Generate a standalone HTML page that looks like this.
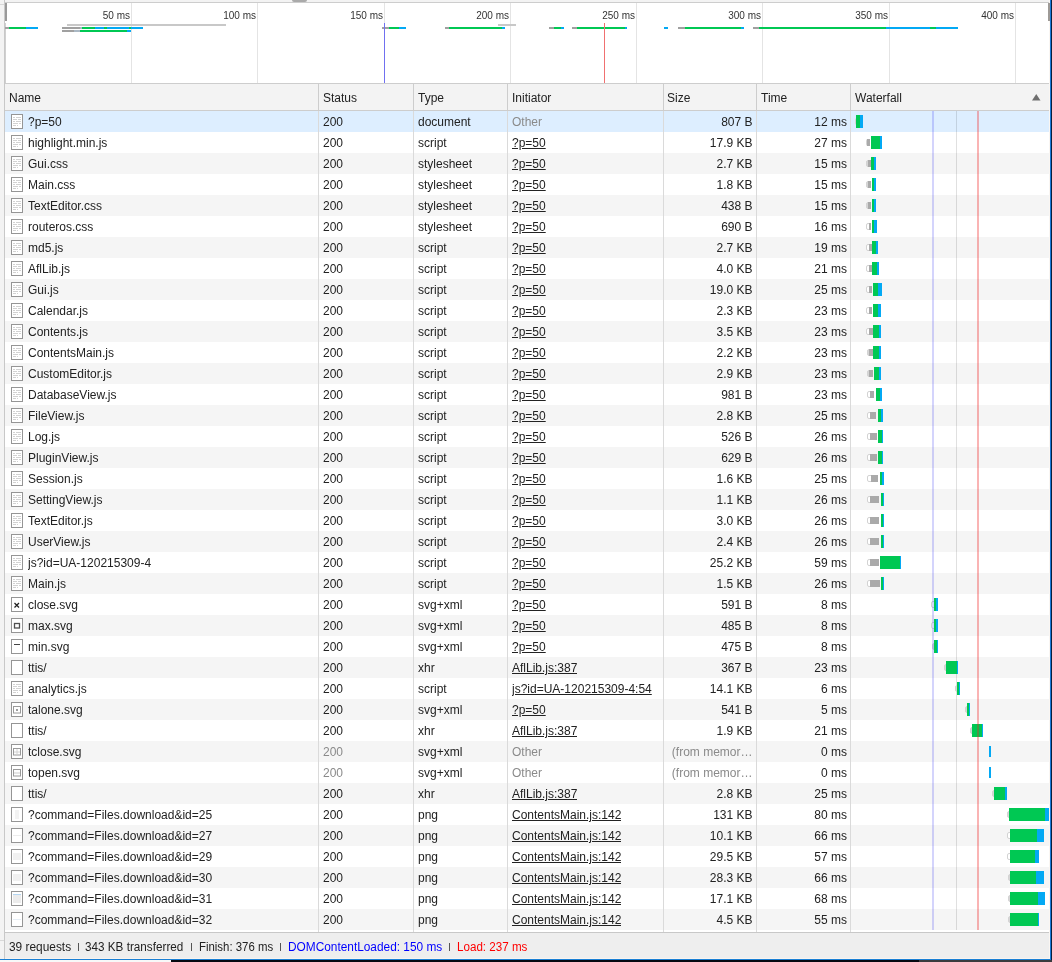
<!DOCTYPE html>
<html><head><meta charset="utf-8"><style>
*{box-sizing:border-box}
body{margin:0;will-change:transform;width:1052px;height:962px;overflow:hidden;background:#f3f3f3;position:relative;font-family:"Liberation Sans",sans-serif;font-size:12px;color:#222}
.a{position:absolute}
.ov{position:absolute;left:5px;top:3px;width:1044px;height:80px;background:#fff;overflow:hidden}
.gl{position:absolute;top:0;width:1px;height:80px;background:#e4e4e4}
.lbl{position:absolute;top:5px;font-size:10px;line-height:16px;color:#333;text-align:right;width:60px;white-space:nowrap}
.ob{position:absolute;height:2px}
.hdr{position:absolute;left:5px;top:84px;width:1044px;height:26px;background:#f3f3f3}
.th{position:absolute;top:1px;height:26px;line-height:26px;white-space:nowrap}
.row{position:absolute;left:5px;width:1044px;height:21px;background:#fff}
.row.g{background:#f5f5f5}
.row.nav{background:#ddeeff}
.c{position:absolute;top:1px;height:21px;line-height:21px;white-space:nowrap;overflow:hidden}
.r{text-align:right}
.u{text-decoration:underline}
.gr{color:#8a8a8a}
.ic{position:absolute;left:6px;top:3px;width:12px;height:15px;border:1px solid #959595;background:#fff}
.sv{position:absolute;left:0;top:0}
.pi{position:absolute}
.dl{position:absolute;height:1px;background:#d2d2d2}
.vd{position:absolute;width:1px;background:#cdcdcd;z-index:1}
.bar{position:absolute;height:13px;top:4px;z-index:2}
.q{position:absolute;z-index:2;height:7px;top:7px;border:1px solid #d3d3d3;background:#fff;border-radius:2px 0 0 2px}
.st{position:absolute;z-index:2;height:7px;top:7px;background:#aaa}
.ft{position:absolute;top:934px;height:26px;line-height:26px;white-space:nowrap}
.sp{position:absolute;top:943px;width:1px;height:8px;background:#555}
</style></head><body>

<div class="a" style="left:0;top:4px;width:4px;height:1px;background:#d8d8d8"></div>
<div class="a" style="left:0;top:940px;width:4px;height:1px;background:#d8d8d8"></div>
<div class="a" style="left:4px;top:0;width:1px;height:959px;background:#c8c8c8"></div>
<div class="a" style="left:5px;top:2px;width:1044px;height:1px;background:#cdcdcd"></div>
<div class="a" style="left:292px;top:0;width:15px;height:2px;background:#aaa;border-radius:0 0 4px 4px"></div>
<div class="ov">
<div class="gl" style="left:126px"></div>
<div class="lbl" style="left:65px">50 ms</div>
<div class="gl" style="left:252px"></div>
<div class="lbl" style="left:191px">100 ms</div>
<div class="gl" style="left:379px"></div>
<div class="lbl" style="left:318px">150 ms</div>
<div class="gl" style="left:505px"></div>
<div class="lbl" style="left:444px">200 ms</div>
<div class="gl" style="left:631px"></div>
<div class="lbl" style="left:570px">250 ms</div>
<div class="gl" style="left:757px"></div>
<div class="lbl" style="left:696px">300 ms</div>
<div class="gl" style="left:884px"></div>
<div class="lbl" style="left:823px">350 ms</div>
<div class="gl" style="left:1010px"></div>
<div class="lbl" style="left:949px">400 ms</div>
<div class="a" style="left:0;top:20px;width:1px;height:60px;background:#d0d0d0"></div>
<div class="a" style="left:0;top:0;width:2px;height:18px;background:#999"></div>
<div class="ob" style="left:62px;width:159px;top:21px;background:#c8c8c8"></div>
<div class="ob" style="left:493px;width:18px;top:21px;background:#c8c8c8"></div>
<div class="ob" style="left:0px;width:4px;top:24px;background:#a0a0a0"></div>
<div class="ob" style="left:4px;width:17px;top:24px;background:#00c853"></div>
<div class="ob" style="left:21px;width:12px;top:24px;background:#03a9f4"></div>
<div class="ob" style="left:57px;width:18px;top:24px;background:#a0a0a0"></div>
<div class="ob" style="left:75px;width:2px;top:24px;background:#aab8c4"></div>
<div class="ob" style="left:77px;width:13px;top:24px;background:#00c853"></div>
<div class="ob" style="left:90px;width:9px;top:24px;background:#03a9f4"></div>
<div class="ob" style="left:99px;width:3px;top:24px;background:#00c853"></div>
<div class="ob" style="left:102px;width:22px;top:24px;background:#03a9f4"></div>
<div class="ob" style="left:124px;width:2px;top:24px;background:#00c853"></div>
<div class="ob" style="left:126px;width:12px;top:24px;background:#03a9f4"></div>
<div class="ob" style="left:377px;width:7px;top:24px;background:#a0a0a0"></div>
<div class="ob" style="left:384px;width:10px;top:24px;background:#00c853"></div>
<div class="ob" style="left:394px;width:7px;top:24px;background:#03a9f4"></div>
<div class="ob" style="left:440px;width:4px;top:24px;background:#a0a0a0"></div>
<div class="ob" style="left:444px;width:53px;top:24px;background:#00c853"></div>
<div class="ob" style="left:497px;width:3px;top:24px;background:#03a9f4"></div>
<div class="ob" style="left:544px;width:5px;top:24px;background:#a0a0a0"></div>
<div class="ob" style="left:549px;width:7px;top:24px;background:#00c853"></div>
<div class="ob" style="left:556px;width:3px;top:24px;background:#03a9f4"></div>
<div class="ob" style="left:567px;width:5px;top:24px;background:#a0a0a0"></div>
<div class="ob" style="left:572px;width:48px;top:24px;background:#00c853"></div>
<div class="ob" style="left:620px;width:2px;top:24px;background:#03a9f4"></div>
<div class="ob" style="left:659px;width:2px;top:24px;background:#03a9f4"></div>
<div class="ob" style="left:661px;width:2px;top:24px;background:#03a9f4"></div>
<div class="ob" style="left:673px;width:7px;top:24px;background:#a0a0a0"></div>
<div class="ob" style="left:680px;width:56px;top:24px;background:#00c853"></div>
<div class="ob" style="left:736px;width:3px;top:24px;background:#03a9f4"></div>
<div class="ob" style="left:748px;width:6px;top:24px;background:#a0a0a0"></div>
<div class="ob" style="left:754px;width:127px;top:24px;background:#00c853"></div>
<div class="ob" style="left:881px;width:44px;top:24px;background:#03a9f4"></div>
<div class="ob" style="left:925px;width:6px;top:24px;background:#00c853"></div>
<div class="ob" style="left:931px;width:22px;top:24px;background:#03a9f4"></div>
<div class="ob" style="left:57px;width:12px;top:27px;background:#a0a0a0"></div>
<div class="ob" style="left:69px;width:6px;top:27px;background:#aab8c4"></div>
<div class="ob" style="left:75px;width:47px;top:27px;background:#00c853"></div>
<div class="ob" style="left:122px;width:4px;top:27px;background:#03a9f4"></div>
<div class="a" style="left:379px;top:20px;width:1px;height:60px;background:#7070f0"></div>
<div class="a" style="left:599px;top:20px;width:1px;height:60px;background:#f07070"></div>
</div>
<div class="hdr">
<div class="th" style="left:4px">Name</div>
<div class="th" style="left:318px">Status</div>
<div class="th" style="left:413px">Type</div>
<div class="th" style="left:507px">Initiator</div>
<div class="th" style="left:662px">Size</div>
<div class="th" style="left:756px">Time</div>
<div class="th" style="left:850px">Waterfall</div>
<svg class="a" style="left:1027px;top:10px" width="9" height="7"><path d="M0 6.5L4.25 0L8.5 6.5Z" fill="#6e6e6e"/></svg>
</div>
<div class="a" style="left:5px;top:83px;width:1044px;height:1px;background:#cdcdcd"></div>
<div class="a" style="left:5px;top:110px;width:1044px;height:1px;background:#cdcdcd"></div>
<div class="row nav" style="top:111px"><span class="ic"><i class="dl" style="top:2px;left:1px;width:2px"></i><i class="dl" style="top:2px;left:4px;width:5px"></i><i class="dl" style="top:4px;left:1px;width:4px"></i><i class="dl" style="top:4px;left:6px;width:3px"></i><i class="dl" style="top:6px;left:1px;width:2px"></i><i class="dl" style="top:6px;left:4px;width:5px"></i><i class="dl" style="top:8px;left:1px;width:5px"></i><i class="dl" style="top:8px;left:7px;width:2px"></i><i class="dl" style="top:10px;left:1px;width:3px"></i><i class="dl" style="top:10px;left:5px;width:1px"></i></span><div class="c" style="left:23px;width:290px">?p=50</div><div class="c " style="left:318px">200</div><div class="c" style="left:413px">document</div><div class="c gr" style="left:507px">Other</div><div class="c r " style="left:659.5px;width:88px">807 B</div><div class="c r" style="left:752px;width:90px">12 ms</div><div class="q" style="left:850px;width:2px;background:#d6d6d6"></div><div class="bar" style="left:851px;width:4px;background:#00c853"></div><div class="bar" style="left:855px;width:3px;background:#03a9f4"></div></div>
<div class="row" style="top:132px"><span class="ic"><i class="dl" style="top:2px;left:1px;width:2px"></i><i class="dl" style="top:2px;left:4px;width:5px"></i><i class="dl" style="top:4px;left:1px;width:4px"></i><i class="dl" style="top:4px;left:6px;width:3px"></i><i class="dl" style="top:6px;left:1px;width:2px"></i><i class="dl" style="top:6px;left:4px;width:5px"></i><i class="dl" style="top:8px;left:1px;width:5px"></i><i class="dl" style="top:8px;left:7px;width:2px"></i><i class="dl" style="top:10px;left:1px;width:3px"></i><i class="dl" style="top:10px;left:5px;width:1px"></i></span><div class="c" style="left:23px;width:290px">highlight.min.js</div><div class="c " style="left:318px">200</div><div class="c" style="left:413px">script</div><div class="c u" style="left:507px">?p=50</div><div class="c r " style="left:659.5px;width:88px">17.9 KB</div><div class="c r" style="left:752px;width:90px">27 ms</div><div class="q" style="left:861px;width:2px;background:#d6d6d6"></div><div class="st" style="left:862px;width:3px"></div><div class="bar" style="left:866px;width:9px;background:#00c853"></div><div class="bar" style="left:875px;width:2px;background:#03a9f4"></div></div>
<div class="row g" style="top:153px"><span class="ic"><i class="dl" style="top:2px;left:1px;width:2px"></i><i class="dl" style="top:2px;left:4px;width:5px"></i><i class="dl" style="top:4px;left:1px;width:4px"></i><i class="dl" style="top:4px;left:6px;width:3px"></i><i class="dl" style="top:6px;left:1px;width:2px"></i><i class="dl" style="top:6px;left:4px;width:5px"></i><i class="dl" style="top:8px;left:1px;width:5px"></i><i class="dl" style="top:8px;left:7px;width:2px"></i><i class="dl" style="top:10px;left:1px;width:3px"></i><i class="dl" style="top:10px;left:5px;width:1px"></i></span><div class="c" style="left:23px;width:290px">Gui.css</div><div class="c " style="left:318px">200</div><div class="c" style="left:413px">stylesheet</div><div class="c u" style="left:507px">?p=50</div><div class="c r " style="left:659.5px;width:88px">2.7 KB</div><div class="c r" style="left:752px;width:90px">15 ms</div><div class="q" style="left:861px;width:3px;background:#d6d6d6"></div><div class="st" style="left:863px;width:3px"></div><div class="bar" style="left:866px;width:3px;background:#00c853"></div><div class="bar" style="left:869px;width:2px;background:#03a9f4"></div></div>
<div class="row" style="top:174px"><span class="ic"><i class="dl" style="top:2px;left:1px;width:2px"></i><i class="dl" style="top:2px;left:4px;width:5px"></i><i class="dl" style="top:4px;left:1px;width:4px"></i><i class="dl" style="top:4px;left:6px;width:3px"></i><i class="dl" style="top:6px;left:1px;width:2px"></i><i class="dl" style="top:6px;left:4px;width:5px"></i><i class="dl" style="top:8px;left:1px;width:5px"></i><i class="dl" style="top:8px;left:7px;width:2px"></i><i class="dl" style="top:10px;left:1px;width:3px"></i><i class="dl" style="top:10px;left:5px;width:1px"></i></span><div class="c" style="left:23px;width:290px">Main.css</div><div class="c " style="left:318px">200</div><div class="c" style="left:413px">stylesheet</div><div class="c u" style="left:507px">?p=50</div><div class="c r " style="left:659.5px;width:88px">1.8 KB</div><div class="c r" style="left:752px;width:90px">15 ms</div><div class="q" style="left:861px;width:3px;background:#d6d6d6"></div><div class="st" style="left:863px;width:3px"></div><div class="bar" style="left:867px;width:2px;background:#00c853"></div><div class="bar" style="left:869px;width:2px;background:#03a9f4"></div></div>
<div class="row g" style="top:195px"><span class="ic"><i class="dl" style="top:2px;left:1px;width:2px"></i><i class="dl" style="top:2px;left:4px;width:5px"></i><i class="dl" style="top:4px;left:1px;width:4px"></i><i class="dl" style="top:4px;left:6px;width:3px"></i><i class="dl" style="top:6px;left:1px;width:2px"></i><i class="dl" style="top:6px;left:4px;width:5px"></i><i class="dl" style="top:8px;left:1px;width:5px"></i><i class="dl" style="top:8px;left:7px;width:2px"></i><i class="dl" style="top:10px;left:1px;width:3px"></i><i class="dl" style="top:10px;left:5px;width:1px"></i></span><div class="c" style="left:23px;width:290px">TextEditor.css</div><div class="c " style="left:318px">200</div><div class="c" style="left:413px">stylesheet</div><div class="c u" style="left:507px">?p=50</div><div class="c r " style="left:659.5px;width:88px">438 B</div><div class="c r" style="left:752px;width:90px">15 ms</div><div class="q" style="left:861px;width:3px;background:#d6d6d6"></div><div class="st" style="left:863px;width:3px"></div><div class="bar" style="left:867px;width:2px;background:#00c853"></div><div class="bar" style="left:869px;width:2px;background:#03a9f4"></div></div>
<div class="row" style="top:216px"><span class="ic"><i class="dl" style="top:2px;left:1px;width:2px"></i><i class="dl" style="top:2px;left:4px;width:5px"></i><i class="dl" style="top:4px;left:1px;width:4px"></i><i class="dl" style="top:4px;left:6px;width:3px"></i><i class="dl" style="top:6px;left:1px;width:2px"></i><i class="dl" style="top:6px;left:4px;width:5px"></i><i class="dl" style="top:8px;left:1px;width:5px"></i><i class="dl" style="top:8px;left:7px;width:2px"></i><i class="dl" style="top:10px;left:1px;width:3px"></i><i class="dl" style="top:10px;left:5px;width:1px"></i></span><div class="c" style="left:23px;width:290px">routeros.css</div><div class="c " style="left:318px">200</div><div class="c" style="left:413px">stylesheet</div><div class="c u" style="left:507px">?p=50</div><div class="c r " style="left:659.5px;width:88px">690 B</div><div class="c r" style="left:752px;width:90px">16 ms</div><div class="q" style="left:861px;width:4px"></div><div class="st" style="left:864px;width:2px"></div><div class="bar" style="left:867px;width:2px;background:#00c853"></div><div class="bar" style="left:869px;width:3px;background:#03a9f4"></div></div>
<div class="row g" style="top:237px"><span class="ic"><i class="dl" style="top:2px;left:1px;width:2px"></i><i class="dl" style="top:2px;left:4px;width:5px"></i><i class="dl" style="top:4px;left:1px;width:4px"></i><i class="dl" style="top:4px;left:6px;width:3px"></i><i class="dl" style="top:6px;left:1px;width:2px"></i><i class="dl" style="top:6px;left:4px;width:5px"></i><i class="dl" style="top:8px;left:1px;width:5px"></i><i class="dl" style="top:8px;left:7px;width:2px"></i><i class="dl" style="top:10px;left:1px;width:3px"></i><i class="dl" style="top:10px;left:5px;width:1px"></i></span><div class="c" style="left:23px;width:290px">md5.js</div><div class="c " style="left:318px">200</div><div class="c" style="left:413px">script</div><div class="c u" style="left:507px">?p=50</div><div class="c r " style="left:659.5px;width:88px">2.7 KB</div><div class="c r" style="left:752px;width:90px">19 ms</div><div class="q" style="left:861px;width:4px"></div><div class="st" style="left:864px;width:3px"></div><div class="bar" style="left:867px;width:4px;background:#00c853"></div><div class="bar" style="left:871px;width:2px;background:#03a9f4"></div></div>
<div class="row" style="top:258px"><span class="ic"><i class="dl" style="top:2px;left:1px;width:2px"></i><i class="dl" style="top:2px;left:4px;width:5px"></i><i class="dl" style="top:4px;left:1px;width:4px"></i><i class="dl" style="top:4px;left:6px;width:3px"></i><i class="dl" style="top:6px;left:1px;width:2px"></i><i class="dl" style="top:6px;left:4px;width:5px"></i><i class="dl" style="top:8px;left:1px;width:5px"></i><i class="dl" style="top:8px;left:7px;width:2px"></i><i class="dl" style="top:10px;left:1px;width:3px"></i><i class="dl" style="top:10px;left:5px;width:1px"></i></span><div class="c" style="left:23px;width:290px">AflLib.js</div><div class="c " style="left:318px">200</div><div class="c" style="left:413px">script</div><div class="c u" style="left:507px">?p=50</div><div class="c r " style="left:659.5px;width:88px">4.0 KB</div><div class="c r" style="left:752px;width:90px">21 ms</div><div class="q" style="left:861px;width:4px"></div><div class="st" style="left:864px;width:3px"></div><div class="bar" style="left:867px;width:5px;background:#00c853"></div><div class="bar" style="left:872px;width:2px;background:#03a9f4"></div></div>
<div class="row g" style="top:279px"><span class="ic"><i class="dl" style="top:2px;left:1px;width:2px"></i><i class="dl" style="top:2px;left:4px;width:5px"></i><i class="dl" style="top:4px;left:1px;width:4px"></i><i class="dl" style="top:4px;left:6px;width:3px"></i><i class="dl" style="top:6px;left:1px;width:2px"></i><i class="dl" style="top:6px;left:4px;width:5px"></i><i class="dl" style="top:8px;left:1px;width:5px"></i><i class="dl" style="top:8px;left:7px;width:2px"></i><i class="dl" style="top:10px;left:1px;width:3px"></i><i class="dl" style="top:10px;left:5px;width:1px"></i></span><div class="c" style="left:23px;width:290px">Gui.js</div><div class="c " style="left:318px">200</div><div class="c" style="left:413px">script</div><div class="c u" style="left:507px">?p=50</div><div class="c r " style="left:659.5px;width:88px">19.0 KB</div><div class="c r" style="left:752px;width:90px">25 ms</div><div class="q" style="left:861px;width:4px"></div><div class="st" style="left:864px;width:3px"></div><div class="bar" style="left:868px;width:5px;background:#00c853"></div><div class="bar" style="left:873px;width:4px;background:#03a9f4"></div></div>
<div class="row" style="top:300px"><span class="ic"><i class="dl" style="top:2px;left:1px;width:2px"></i><i class="dl" style="top:2px;left:4px;width:5px"></i><i class="dl" style="top:4px;left:1px;width:4px"></i><i class="dl" style="top:4px;left:6px;width:3px"></i><i class="dl" style="top:6px;left:1px;width:2px"></i><i class="dl" style="top:6px;left:4px;width:5px"></i><i class="dl" style="top:8px;left:1px;width:5px"></i><i class="dl" style="top:8px;left:7px;width:2px"></i><i class="dl" style="top:10px;left:1px;width:3px"></i><i class="dl" style="top:10px;left:5px;width:1px"></i></span><div class="c" style="left:23px;width:290px">Calendar.js</div><div class="c " style="left:318px">200</div><div class="c" style="left:413px">script</div><div class="c u" style="left:507px">?p=50</div><div class="c r " style="left:659.5px;width:88px">2.3 KB</div><div class="c r" style="left:752px;width:90px">23 ms</div><div class="q" style="left:861px;width:4px"></div><div class="st" style="left:864px;width:3px"></div><div class="bar" style="left:868px;width:5px;background:#00c853"></div><div class="bar" style="left:873px;width:3px;background:#03a9f4"></div></div>
<div class="row g" style="top:321px"><span class="ic"><i class="dl" style="top:2px;left:1px;width:2px"></i><i class="dl" style="top:2px;left:4px;width:5px"></i><i class="dl" style="top:4px;left:1px;width:4px"></i><i class="dl" style="top:4px;left:6px;width:3px"></i><i class="dl" style="top:6px;left:1px;width:2px"></i><i class="dl" style="top:6px;left:4px;width:5px"></i><i class="dl" style="top:8px;left:1px;width:5px"></i><i class="dl" style="top:8px;left:7px;width:2px"></i><i class="dl" style="top:10px;left:1px;width:3px"></i><i class="dl" style="top:10px;left:5px;width:1px"></i></span><div class="c" style="left:23px;width:290px">Contents.js</div><div class="c " style="left:318px">200</div><div class="c" style="left:413px">script</div><div class="c u" style="left:507px">?p=50</div><div class="c r " style="left:659.5px;width:88px">3.5 KB</div><div class="c r" style="left:752px;width:90px">23 ms</div><div class="q" style="left:861px;width:4px"></div><div class="st" style="left:864px;width:4px"></div><div class="bar" style="left:868px;width:6px;background:#00c853"></div><div class="bar" style="left:874px;width:2px;background:#03a9f4"></div></div>
<div class="row" style="top:342px"><span class="ic"><i class="dl" style="top:2px;left:1px;width:2px"></i><i class="dl" style="top:2px;left:4px;width:5px"></i><i class="dl" style="top:4px;left:1px;width:4px"></i><i class="dl" style="top:4px;left:6px;width:3px"></i><i class="dl" style="top:6px;left:1px;width:2px"></i><i class="dl" style="top:6px;left:4px;width:5px"></i><i class="dl" style="top:8px;left:1px;width:5px"></i><i class="dl" style="top:8px;left:7px;width:2px"></i><i class="dl" style="top:10px;left:1px;width:3px"></i><i class="dl" style="top:10px;left:5px;width:1px"></i></span><div class="c" style="left:23px;width:290px">ContentsMain.js</div><div class="c " style="left:318px">200</div><div class="c" style="left:413px">script</div><div class="c u" style="left:507px">?p=50</div><div class="c r " style="left:659.5px;width:88px">2.2 KB</div><div class="c r" style="left:752px;width:90px">23 ms</div><div class="q" style="left:862px;width:3px;background:#d6d6d6"></div><div class="st" style="left:864px;width:4px"></div><div class="bar" style="left:868px;width:6px;background:#00c853"></div><div class="bar" style="left:874px;width:2px;background:#03a9f4"></div></div>
<div class="row g" style="top:363px"><span class="ic"><i class="dl" style="top:2px;left:1px;width:2px"></i><i class="dl" style="top:2px;left:4px;width:5px"></i><i class="dl" style="top:4px;left:1px;width:4px"></i><i class="dl" style="top:4px;left:6px;width:3px"></i><i class="dl" style="top:6px;left:1px;width:2px"></i><i class="dl" style="top:6px;left:4px;width:5px"></i><i class="dl" style="top:8px;left:1px;width:5px"></i><i class="dl" style="top:8px;left:7px;width:2px"></i><i class="dl" style="top:10px;left:1px;width:3px"></i><i class="dl" style="top:10px;left:5px;width:1px"></i></span><div class="c" style="left:23px;width:290px">CustomEditor.js</div><div class="c " style="left:318px">200</div><div class="c" style="left:413px">script</div><div class="c u" style="left:507px">?p=50</div><div class="c r " style="left:659.5px;width:88px">2.9 KB</div><div class="c r" style="left:752px;width:90px">23 ms</div><div class="q" style="left:862px;width:3px;background:#d6d6d6"></div><div class="st" style="left:864px;width:4px"></div><div class="bar" style="left:869px;width:5px;background:#00c853"></div><div class="bar" style="left:874px;width:2px;background:#03a9f4"></div></div>
<div class="row" style="top:384px"><span class="ic"><i class="dl" style="top:2px;left:1px;width:2px"></i><i class="dl" style="top:2px;left:4px;width:5px"></i><i class="dl" style="top:4px;left:1px;width:4px"></i><i class="dl" style="top:4px;left:6px;width:3px"></i><i class="dl" style="top:6px;left:1px;width:2px"></i><i class="dl" style="top:6px;left:4px;width:5px"></i><i class="dl" style="top:8px;left:1px;width:5px"></i><i class="dl" style="top:8px;left:7px;width:2px"></i><i class="dl" style="top:10px;left:1px;width:3px"></i><i class="dl" style="top:10px;left:5px;width:1px"></i></span><div class="c" style="left:23px;width:290px">DatabaseView.js</div><div class="c " style="left:318px">200</div><div class="c" style="left:413px">script</div><div class="c u" style="left:507px">?p=50</div><div class="c r " style="left:659.5px;width:88px">981 B</div><div class="c r" style="left:752px;width:90px">23 ms</div><div class="q" style="left:862px;width:4px"></div><div class="st" style="left:865px;width:4px"></div><div class="bar" style="left:871px;width:4px;background:#00c853"></div><div class="bar" style="left:875px;width:2px;background:#03a9f4"></div></div>
<div class="row g" style="top:405px"><span class="ic"><i class="dl" style="top:2px;left:1px;width:2px"></i><i class="dl" style="top:2px;left:4px;width:5px"></i><i class="dl" style="top:4px;left:1px;width:4px"></i><i class="dl" style="top:4px;left:6px;width:3px"></i><i class="dl" style="top:6px;left:1px;width:2px"></i><i class="dl" style="top:6px;left:4px;width:5px"></i><i class="dl" style="top:8px;left:1px;width:5px"></i><i class="dl" style="top:8px;left:7px;width:2px"></i><i class="dl" style="top:10px;left:1px;width:3px"></i><i class="dl" style="top:10px;left:5px;width:1px"></i></span><div class="c" style="left:23px;width:290px">FileView.js</div><div class="c " style="left:318px">200</div><div class="c" style="left:413px">script</div><div class="c u" style="left:507px">?p=50</div><div class="c r " style="left:659.5px;width:88px">2.8 KB</div><div class="c r" style="left:752px;width:90px">25 ms</div><div class="q" style="left:862px;width:4px"></div><div class="st" style="left:865px;width:6px"></div><div class="bar" style="left:873px;width:3px;background:#00c853"></div><div class="bar" style="left:876px;width:2px;background:#03a9f4"></div></div>
<div class="row" style="top:426px"><span class="ic"><i class="dl" style="top:2px;left:1px;width:2px"></i><i class="dl" style="top:2px;left:4px;width:5px"></i><i class="dl" style="top:4px;left:1px;width:4px"></i><i class="dl" style="top:4px;left:6px;width:3px"></i><i class="dl" style="top:6px;left:1px;width:2px"></i><i class="dl" style="top:6px;left:4px;width:5px"></i><i class="dl" style="top:8px;left:1px;width:5px"></i><i class="dl" style="top:8px;left:7px;width:2px"></i><i class="dl" style="top:10px;left:1px;width:3px"></i><i class="dl" style="top:10px;left:5px;width:1px"></i></span><div class="c" style="left:23px;width:290px">Log.js</div><div class="c " style="left:318px">200</div><div class="c" style="left:413px">script</div><div class="c u" style="left:507px">?p=50</div><div class="c r " style="left:659.5px;width:88px">526 B</div><div class="c r" style="left:752px;width:90px">26 ms</div><div class="q" style="left:862px;width:4px"></div><div class="st" style="left:865px;width:7px"></div><div class="bar" style="left:873px;width:4px;background:#00c853"></div><div class="bar" style="left:877px;width:1px;background:#03a9f4"></div></div>
<div class="row g" style="top:447px"><span class="ic"><i class="dl" style="top:2px;left:1px;width:2px"></i><i class="dl" style="top:2px;left:4px;width:5px"></i><i class="dl" style="top:4px;left:1px;width:4px"></i><i class="dl" style="top:4px;left:6px;width:3px"></i><i class="dl" style="top:6px;left:1px;width:2px"></i><i class="dl" style="top:6px;left:4px;width:5px"></i><i class="dl" style="top:8px;left:1px;width:5px"></i><i class="dl" style="top:8px;left:7px;width:2px"></i><i class="dl" style="top:10px;left:1px;width:3px"></i><i class="dl" style="top:10px;left:5px;width:1px"></i></span><div class="c" style="left:23px;width:290px">PluginView.js</div><div class="c " style="left:318px">200</div><div class="c" style="left:413px">script</div><div class="c u" style="left:507px">?p=50</div><div class="c r " style="left:659.5px;width:88px">629 B</div><div class="c r" style="left:752px;width:90px">26 ms</div><div class="q" style="left:862px;width:4px"></div><div class="st" style="left:865px;width:7px"></div><div class="bar" style="left:873px;width:4px;background:#00c853"></div><div class="bar" style="left:877px;width:1px;background:#03a9f4"></div></div>
<div class="row" style="top:468px"><span class="ic"><i class="dl" style="top:2px;left:1px;width:2px"></i><i class="dl" style="top:2px;left:4px;width:5px"></i><i class="dl" style="top:4px;left:1px;width:4px"></i><i class="dl" style="top:4px;left:6px;width:3px"></i><i class="dl" style="top:6px;left:1px;width:2px"></i><i class="dl" style="top:6px;left:4px;width:5px"></i><i class="dl" style="top:8px;left:1px;width:5px"></i><i class="dl" style="top:8px;left:7px;width:2px"></i><i class="dl" style="top:10px;left:1px;width:3px"></i><i class="dl" style="top:10px;left:5px;width:1px"></i></span><div class="c" style="left:23px;width:290px">Session.js</div><div class="c " style="left:318px">200</div><div class="c" style="left:413px">script</div><div class="c u" style="left:507px">?p=50</div><div class="c r " style="left:659.5px;width:88px">1.6 KB</div><div class="c r" style="left:752px;width:90px">25 ms</div><div class="q" style="left:862px;width:5px"></div><div class="st" style="left:866px;width:7px"></div><div class="bar" style="left:875px;width:2px;background:#00c853"></div><div class="bar" style="left:877px;width:2px;background:#03a9f4"></div></div>
<div class="row g" style="top:489px"><span class="ic"><i class="dl" style="top:2px;left:1px;width:2px"></i><i class="dl" style="top:2px;left:4px;width:5px"></i><i class="dl" style="top:4px;left:1px;width:4px"></i><i class="dl" style="top:4px;left:6px;width:3px"></i><i class="dl" style="top:6px;left:1px;width:2px"></i><i class="dl" style="top:6px;left:4px;width:5px"></i><i class="dl" style="top:8px;left:1px;width:5px"></i><i class="dl" style="top:8px;left:7px;width:2px"></i><i class="dl" style="top:10px;left:1px;width:3px"></i><i class="dl" style="top:10px;left:5px;width:1px"></i></span><div class="c" style="left:23px;width:290px">SettingView.js</div><div class="c " style="left:318px">200</div><div class="c" style="left:413px">script</div><div class="c u" style="left:507px">?p=50</div><div class="c r " style="left:659.5px;width:88px">1.1 KB</div><div class="c r" style="left:752px;width:90px">26 ms</div><div class="q" style="left:862px;width:4px"></div><div class="st" style="left:865px;width:9px"></div><div class="bar" style="left:876px;width:2px;background:#00c853"></div><div class="bar" style="left:878px;width:1px;background:#03a9f4"></div></div>
<div class="row" style="top:510px"><span class="ic"><i class="dl" style="top:2px;left:1px;width:2px"></i><i class="dl" style="top:2px;left:4px;width:5px"></i><i class="dl" style="top:4px;left:1px;width:4px"></i><i class="dl" style="top:4px;left:6px;width:3px"></i><i class="dl" style="top:6px;left:1px;width:2px"></i><i class="dl" style="top:6px;left:4px;width:5px"></i><i class="dl" style="top:8px;left:1px;width:5px"></i><i class="dl" style="top:8px;left:7px;width:2px"></i><i class="dl" style="top:10px;left:1px;width:3px"></i><i class="dl" style="top:10px;left:5px;width:1px"></i></span><div class="c" style="left:23px;width:290px">TextEditor.js</div><div class="c " style="left:318px">200</div><div class="c" style="left:413px">script</div><div class="c u" style="left:507px">?p=50</div><div class="c r " style="left:659.5px;width:88px">3.0 KB</div><div class="c r" style="left:752px;width:90px">26 ms</div><div class="q" style="left:862px;width:4px"></div><div class="st" style="left:865px;width:9px"></div><div class="bar" style="left:876px;width:2px;background:#00c853"></div><div class="bar" style="left:878px;width:1px;background:#03a9f4"></div></div>
<div class="row g" style="top:531px"><span class="ic"><i class="dl" style="top:2px;left:1px;width:2px"></i><i class="dl" style="top:2px;left:4px;width:5px"></i><i class="dl" style="top:4px;left:1px;width:4px"></i><i class="dl" style="top:4px;left:6px;width:3px"></i><i class="dl" style="top:6px;left:1px;width:2px"></i><i class="dl" style="top:6px;left:4px;width:5px"></i><i class="dl" style="top:8px;left:1px;width:5px"></i><i class="dl" style="top:8px;left:7px;width:2px"></i><i class="dl" style="top:10px;left:1px;width:3px"></i><i class="dl" style="top:10px;left:5px;width:1px"></i></span><div class="c" style="left:23px;width:290px">UserView.js</div><div class="c " style="left:318px">200</div><div class="c" style="left:413px">script</div><div class="c u" style="left:507px">?p=50</div><div class="c r " style="left:659.5px;width:88px">2.4 KB</div><div class="c r" style="left:752px;width:90px">26 ms</div><div class="q" style="left:862px;width:4px"></div><div class="st" style="left:865px;width:9px"></div><div class="bar" style="left:876px;width:2px;background:#00c853"></div><div class="bar" style="left:878px;width:1px;background:#03a9f4"></div></div>
<div class="row" style="top:552px"><span class="ic"><i class="dl" style="top:2px;left:1px;width:2px"></i><i class="dl" style="top:2px;left:4px;width:5px"></i><i class="dl" style="top:4px;left:1px;width:4px"></i><i class="dl" style="top:4px;left:6px;width:3px"></i><i class="dl" style="top:6px;left:1px;width:2px"></i><i class="dl" style="top:6px;left:4px;width:5px"></i><i class="dl" style="top:8px;left:1px;width:5px"></i><i class="dl" style="top:8px;left:7px;width:2px"></i><i class="dl" style="top:10px;left:1px;width:3px"></i><i class="dl" style="top:10px;left:5px;width:1px"></i></span><div class="c" style="left:23px;width:290px">js?id=UA-120215309-4</div><div class="c " style="left:318px">200</div><div class="c" style="left:413px">script</div><div class="c u" style="left:507px">?p=50</div><div class="c r " style="left:659.5px;width:88px">25.2 KB</div><div class="c r" style="left:752px;width:90px">59 ms</div><div class="q" style="left:862px;width:4px"></div><div class="st" style="left:865px;width:9px"></div><div class="bar" style="left:875px;width:20px;background:#00c853"></div><div class="bar" style="left:895px;width:1px;background:#03a9f4"></div></div>
<div class="row g" style="top:573px"><span class="ic"><i class="dl" style="top:2px;left:1px;width:2px"></i><i class="dl" style="top:2px;left:4px;width:5px"></i><i class="dl" style="top:4px;left:1px;width:4px"></i><i class="dl" style="top:4px;left:6px;width:3px"></i><i class="dl" style="top:6px;left:1px;width:2px"></i><i class="dl" style="top:6px;left:4px;width:5px"></i><i class="dl" style="top:8px;left:1px;width:5px"></i><i class="dl" style="top:8px;left:7px;width:2px"></i><i class="dl" style="top:10px;left:1px;width:3px"></i><i class="dl" style="top:10px;left:5px;width:1px"></i></span><div class="c" style="left:23px;width:290px">Main.js</div><div class="c " style="left:318px">200</div><div class="c" style="left:413px">script</div><div class="c u" style="left:507px">?p=50</div><div class="c r " style="left:659.5px;width:88px">1.5 KB</div><div class="c r" style="left:752px;width:90px">26 ms</div><div class="q" style="left:862px;width:4px"></div><div class="st" style="left:865px;width:10px"></div><div class="bar" style="left:876px;width:2px;background:#00c853"></div><div class="bar" style="left:878px;width:1px;background:#03a9f4"></div></div>
<div class="row" style="top:594px"><span class="ic"><svg width="10" height="13" class="sv"><path d="M2.5 5L7 9.5M7 5L2.5 9.5" stroke="#222" stroke-width="1.25"/></svg></span><div class="c" style="left:23px;width:290px">close.svg</div><div class="c " style="left:318px">200</div><div class="c" style="left:413px">svg+xml</div><div class="c u" style="left:507px">?p=50</div><div class="c r " style="left:659.5px;width:88px">591 B</div><div class="c r" style="left:752px;width:90px">8 ms</div><div class="q" style="left:926px;width:4px"></div><div class="bar" style="left:929px;width:2px;background:#00c853"></div><div class="bar" style="left:931px;width:2px;background:#03a9f4"></div></div>
<div class="row g" style="top:615px"><span class="ic"><svg width="10" height="13" class="sv"><rect x="2.5" y="4.5" width="5" height="4.5" fill="none" stroke="#505050" stroke-width="1.3"/></svg></span><div class="c" style="left:23px;width:290px">max.svg</div><div class="c " style="left:318px">200</div><div class="c" style="left:413px">svg+xml</div><div class="c u" style="left:507px">?p=50</div><div class="c r " style="left:659.5px;width:88px">485 B</div><div class="c r" style="left:752px;width:90px">8 ms</div><div class="q" style="left:926px;width:4px"></div><div class="bar" style="left:929px;width:2px;background:#00c853"></div><div class="bar" style="left:931px;width:2px;background:#03a9f4"></div></div>
<div class="row" style="top:636px"><span class="ic"><svg width="10" height="13" class="sv"><path d="M2 4.5H8" stroke="#444" stroke-width="1"/></svg></span><div class="c" style="left:23px;width:290px">min.svg</div><div class="c " style="left:318px">200</div><div class="c" style="left:413px">svg+xml</div><div class="c u" style="left:507px">?p=50</div><div class="c r " style="left:659.5px;width:88px">475 B</div><div class="c r" style="left:752px;width:90px">8 ms</div><div class="q" style="left:927px;width:3px;background:#d6d6d6"></div><div class="bar" style="left:929px;width:3px;background:#00c853"></div><div class="bar" style="left:932px;width:1px;background:#03a9f4"></div></div>
<div class="row g" style="top:657px"><span class="ic"></span><div class="c" style="left:23px;width:290px">ttis/</div><div class="c " style="left:318px">200</div><div class="c" style="left:413px">xhr</div><div class="c u" style="left:507px">AflLib.js:387</div><div class="c r " style="left:659.5px;width:88px">367 B</div><div class="c r" style="left:752px;width:90px">23 ms</div><div class="q" style="left:939px;width:3px;background:#d6d6d6"></div><div class="bar" style="left:941px;width:11px;background:#00c853"></div><div class="bar" style="left:952px;width:1px;background:#03a9f4"></div></div>
<div class="row" style="top:678px"><span class="ic"><i class="dl" style="top:2px;left:1px;width:2px"></i><i class="dl" style="top:2px;left:4px;width:5px"></i><i class="dl" style="top:4px;left:1px;width:4px"></i><i class="dl" style="top:4px;left:6px;width:3px"></i><i class="dl" style="top:6px;left:1px;width:2px"></i><i class="dl" style="top:6px;left:4px;width:5px"></i><i class="dl" style="top:8px;left:1px;width:5px"></i><i class="dl" style="top:8px;left:7px;width:2px"></i><i class="dl" style="top:10px;left:1px;width:3px"></i><i class="dl" style="top:10px;left:5px;width:1px"></i></span><div class="c" style="left:23px;width:290px">analytics.js</div><div class="c " style="left:318px">200</div><div class="c" style="left:413px">script</div><div class="c u" style="left:507px">js?id=UA-120215309-4:54</div><div class="c r " style="left:659.5px;width:88px">14.1 KB</div><div class="c r" style="left:752px;width:90px">6 ms</div><div class="q" style="left:950px;width:3px;background:#d6d6d6"></div><div class="bar" style="left:952px;width:2px;background:#00c853"></div><div class="bar" style="left:954px;width:1px;background:#03a9f4"></div></div>
<div class="row g" style="top:699px"><span class="ic"><svg width="10" height="13" class="sv"><rect x="1.5" y="3.5" width="7" height="6.5" fill="none" stroke="#9a9a9a" stroke-width="1"/><rect x="4.2" y="6.2" width="1.6" height="1.6" fill="#666"/></svg></span><div class="c" style="left:23px;width:290px">talone.svg</div><div class="c " style="left:318px">200</div><div class="c" style="left:413px">svg+xml</div><div class="c u" style="left:507px">?p=50</div><div class="c r " style="left:659.5px;width:88px">541 B</div><div class="c r" style="left:752px;width:90px">5 ms</div><div class="q" style="left:960px;width:3px;background:#d6d6d6"></div><div class="bar" style="left:962px;width:2px;background:#00c853"></div><div class="bar" style="left:964px;width:1px;background:#03a9f4"></div></div>
<div class="row" style="top:720px"><span class="ic"></span><div class="c" style="left:23px;width:290px">ttis/</div><div class="c " style="left:318px">200</div><div class="c" style="left:413px">xhr</div><div class="c u" style="left:507px">AflLib.js:387</div><div class="c r " style="left:659.5px;width:88px">1.9 KB</div><div class="c r" style="left:752px;width:90px">21 ms</div><div class="q" style="left:965px;width:3px;background:#d6d6d6"></div><div class="bar" style="left:967px;width:10px;background:#00c853"></div><div class="bar" style="left:977px;width:1px;background:#03a9f4"></div></div>
<div class="row g" style="top:741px"><span class="ic"><svg width="10" height="13" class="sv"><rect x="1.5" y="3.5" width="7" height="6.5" fill="none" stroke="#9a9a9a" stroke-width="1"/><path d="M5 4V9.5M2 7H8" stroke="#d4d4d4" stroke-width="1"/></svg></span><div class="c" style="left:23px;width:290px">tclose.svg</div><div class="c gr" style="left:318px">200</div><div class="c" style="left:413px">svg+xml</div><div class="c gr" style="left:507px">Other</div><div class="c r gr" style="left:659.5px;width:88px">(from memor…</div><div class="c r" style="left:752px;width:90px">0 ms</div><div class="bar" style="left:984px;width:2px;top:5px;height:11px;background:#03a9f4"></div></div>
<div class="row" style="top:762px"><span class="ic"><svg width="10" height="13" class="sv"><rect x="1.5" y="3.5" width="7" height="6.5" fill="none" stroke="#9a9a9a" stroke-width="1"/><path d="M2 7H8" stroke="#cccccc" stroke-width="1"/></svg></span><div class="c" style="left:23px;width:290px">topen.svg</div><div class="c gr" style="left:318px">200</div><div class="c" style="left:413px">svg+xml</div><div class="c gr" style="left:507px">Other</div><div class="c r gr" style="left:659.5px;width:88px">(from memor…</div><div class="c r" style="left:752px;width:90px">0 ms</div><div class="bar" style="left:984px;width:2px;top:5px;height:11px;background:#03a9f4"></div></div>
<div class="row g" style="top:783px"><span class="ic"></span><div class="c" style="left:23px;width:290px">ttis/</div><div class="c " style="left:318px">200</div><div class="c" style="left:413px">xhr</div><div class="c u" style="left:507px">AflLib.js:387</div><div class="c r " style="left:659.5px;width:88px">2.8 KB</div><div class="c r" style="left:752px;width:90px">25 ms</div><div class="q" style="left:987px;width:3px;background:#d6d6d6"></div><div class="bar" style="left:989px;width:11px;background:#00c853"></div><div class="bar" style="left:1000px;width:2px;background:#03a9f4"></div></div>
<div class="row" style="top:804px"><span class="ic"><i class="pi" style="left:3px;top:2px;width:4px;height:9px;background:#f3f3f3"></i></span><div class="c" style="left:23px;width:290px">?command=Files.download&amp;id=25</div><div class="c " style="left:318px">200</div><div class="c" style="left:413px">png</div><div class="c u" style="left:507px">ContentsMain.js:142</div><div class="c r " style="left:659.5px;width:88px">131 KB</div><div class="c r" style="left:752px;width:90px">80 ms</div><div class="q" style="left:1002px;width:3px;background:#d6d6d6"></div><div class="bar" style="left:1004px;width:36px;background:#00c853"></div><div class="bar" style="left:1040px;width:4px;background:#03a9f4"></div></div>
<div class="row g" style="top:825px"><span class="ic"><i class="pi" style="left:1px;top:6px;width:8px;height:1px;background:#ececec"></i></span><div class="c" style="left:23px;width:290px">?command=Files.download&amp;id=27</div><div class="c " style="left:318px">200</div><div class="c" style="left:413px">png</div><div class="c u" style="left:507px">ContentsMain.js:142</div><div class="c r " style="left:659.5px;width:88px">10.1 KB</div><div class="c r" style="left:752px;width:90px">66 ms</div><div class="q" style="left:1002px;width:4px"></div><div class="bar" style="left:1005px;width:27px;background:#00c853"></div><div class="bar" style="left:1032px;width:7px;background:#03a9f4"></div></div>
<div class="row" style="top:846px"><span class="ic"><i class="pi" style="left:1px;top:3px;width:8px;height:7px;background:#f1f1f1"></i></span><div class="c" style="left:23px;width:290px">?command=Files.download&amp;id=29</div><div class="c " style="left:318px">200</div><div class="c" style="left:413px">png</div><div class="c u" style="left:507px">ContentsMain.js:142</div><div class="c r " style="left:659.5px;width:88px">29.5 KB</div><div class="c r" style="left:752px;width:90px">57 ms</div><div class="q" style="left:1002px;width:4px"></div><div class="bar" style="left:1005px;width:25px;background:#00c853"></div><div class="bar" style="left:1030px;width:4px;background:#03a9f4"></div></div>
<div class="row g" style="top:867px"><span class="ic"><i class="pi" style="left:1px;top:3px;width:8px;height:7px;background:#f1f1f1"></i></span><div class="c" style="left:23px;width:290px">?command=Files.download&amp;id=30</div><div class="c " style="left:318px">200</div><div class="c" style="left:413px">png</div><div class="c u" style="left:507px">ContentsMain.js:142</div><div class="c r " style="left:659.5px;width:88px">28.3 KB</div><div class="c r" style="left:752px;width:90px">66 ms</div><div class="q" style="left:1003px;width:3px;background:#d6d6d6"></div><div class="bar" style="left:1005px;width:26px;background:#00c853"></div><div class="bar" style="left:1031px;width:8px;background:#03a9f4"></div></div>
<div class="row" style="top:888px"><span class="ic"><i class="pi" style="left:1px;top:2px;width:8px;height:9px;background:#ececec"></i><i class="pi" style="left:1px;top:2px;width:8px;height:1px;background:#b4d6f2"></i></span><div class="c" style="left:23px;width:290px">?command=Files.download&amp;id=31</div><div class="c " style="left:318px">200</div><div class="c" style="left:413px">png</div><div class="c u" style="left:507px">ContentsMain.js:142</div><div class="c r " style="left:659.5px;width:88px">17.1 KB</div><div class="c r" style="left:752px;width:90px">68 ms</div><div class="q" style="left:1003px;width:3px;background:#d6d6d6"></div><div class="bar" style="left:1005px;width:28px;background:#00c853"></div><div class="bar" style="left:1033px;width:7px;background:#03a9f4"></div></div>
<div class="row g" style="top:909px"><span class="ic"><i class="pi" style="left:1px;top:6px;width:8px;height:1px;background:#e6eef6"></i></span><div class="c" style="left:23px;width:290px">?command=Files.download&amp;id=32</div><div class="c " style="left:318px">200</div><div class="c" style="left:413px">png</div><div class="c u" style="left:507px">ContentsMain.js:142</div><div class="c r " style="left:659.5px;width:88px">4.5 KB</div><div class="c r" style="left:752px;width:90px">55 ms</div><div class="q" style="left:1003px;width:3px;background:#d6d6d6"></div><div class="bar" style="left:1005px;width:28px;background:#00c853"></div><div class="bar" style="left:1033px;width:1px;background:#03a9f4"></div></div>
<div class="vd" style="left:318px;top:84px;height:27px"></div>
<div class="vd" style="left:318px;top:111px;height:821px;background:#dadada"></div>
<div class="vd" style="left:413px;top:84px;height:27px"></div>
<div class="vd" style="left:413px;top:111px;height:821px;background:#dadada"></div>
<div class="vd" style="left:507px;top:84px;height:27px"></div>
<div class="vd" style="left:507px;top:111px;height:821px;background:#dadada"></div>
<div class="vd" style="left:663px;top:84px;height:27px"></div>
<div class="vd" style="left:663px;top:111px;height:821px;background:#dadada"></div>
<div class="vd" style="left:756px;top:84px;height:27px"></div>
<div class="vd" style="left:756px;top:111px;height:821px;background:#dadada"></div>
<div class="vd" style="left:850px;top:84px;height:27px"></div>
<div class="vd" style="left:850px;top:111px;height:821px;background:#dadada"></div>
<div class="a" style="left:932px;top:111px;width:2px;height:819px;background:rgba(60,60,240,0.22);z-index:3"></div>
<div class="a" style="left:956px;top:111px;width:1px;height:819px;background:rgba(0,0,0,0.12);z-index:1"></div>
<div class="a" style="left:977px;top:111px;width:2px;height:819px;background:rgba(240,40,40,0.35);z-index:3"></div>
<div class="a" style="left:5px;top:930px;width:1044px;height:2px;background:#fff"></div>
<div class="a" style="left:5px;top:932px;width:1044px;height:1px;background:#c8c8c8"></div>
<div class="a" style="left:5px;top:933px;width:1044px;height:26px;background:#eeeeee"></div>
<div class="ft" style="left:9.2px;color:#222;transform:scaleX(0.990);transform-origin:0 0">39 requests</div>
<div class="ft" style="left:85.3px;color:#222;transform:scaleX(0.976);transform-origin:0 0">343 KB transferred</div>
<div class="ft" style="left:198.5px;color:#222;transform:scaleX(0.950);transform-origin:0 0">Finish: 376 ms</div>
<div class="ft" style="left:287.8px;color:#0000ff;transform:scaleX(0.988);transform-origin:0 0">DOMContentLoaded: 150 ms</div>
<div class="ft" style="left:456.5px;color:#ff0000;transform:scaleX(0.968);transform-origin:0 0">Load: 237 ms</div>
<div class="sp" style="left:78px"></div>
<div class="sp" style="left:191px"></div>
<div class="sp" style="left:280px"></div>
<div class="sp" style="left:449px"></div>
<div class="a" style="left:0;top:959px;width:1052px;height:1px;background:#1a7fd4"></div>
<div class="a" style="left:171px;top:960px;width:748px;height:2px;background:#050810"></div>
<div class="a" style="left:919px;top:960px;width:133px;height:2px;background:#3a3b3e"></div>
<div class="a" style="left:5px;top:958px;width:1044px;height:1px;background:#f8f4f0"></div>
<div class="a" style="left:0;top:960px;width:171px;height:2px;background:#f8f8f8"></div>
<div class="a" style="left:1049px;top:0;width:1px;height:959px;background:#faf6f2"></div>
<div class="a" style="left:1048px;top:3px;width:2px;height:18px;background:#9e9a96"></div>
<div class="a" style="left:1050px;top:0;width:1px;height:960px;background:#1a7ad8"></div>
<div class="a" style="left:1051px;top:0;width:1px;height:960px;background:#062040"></div>
</body></html>
